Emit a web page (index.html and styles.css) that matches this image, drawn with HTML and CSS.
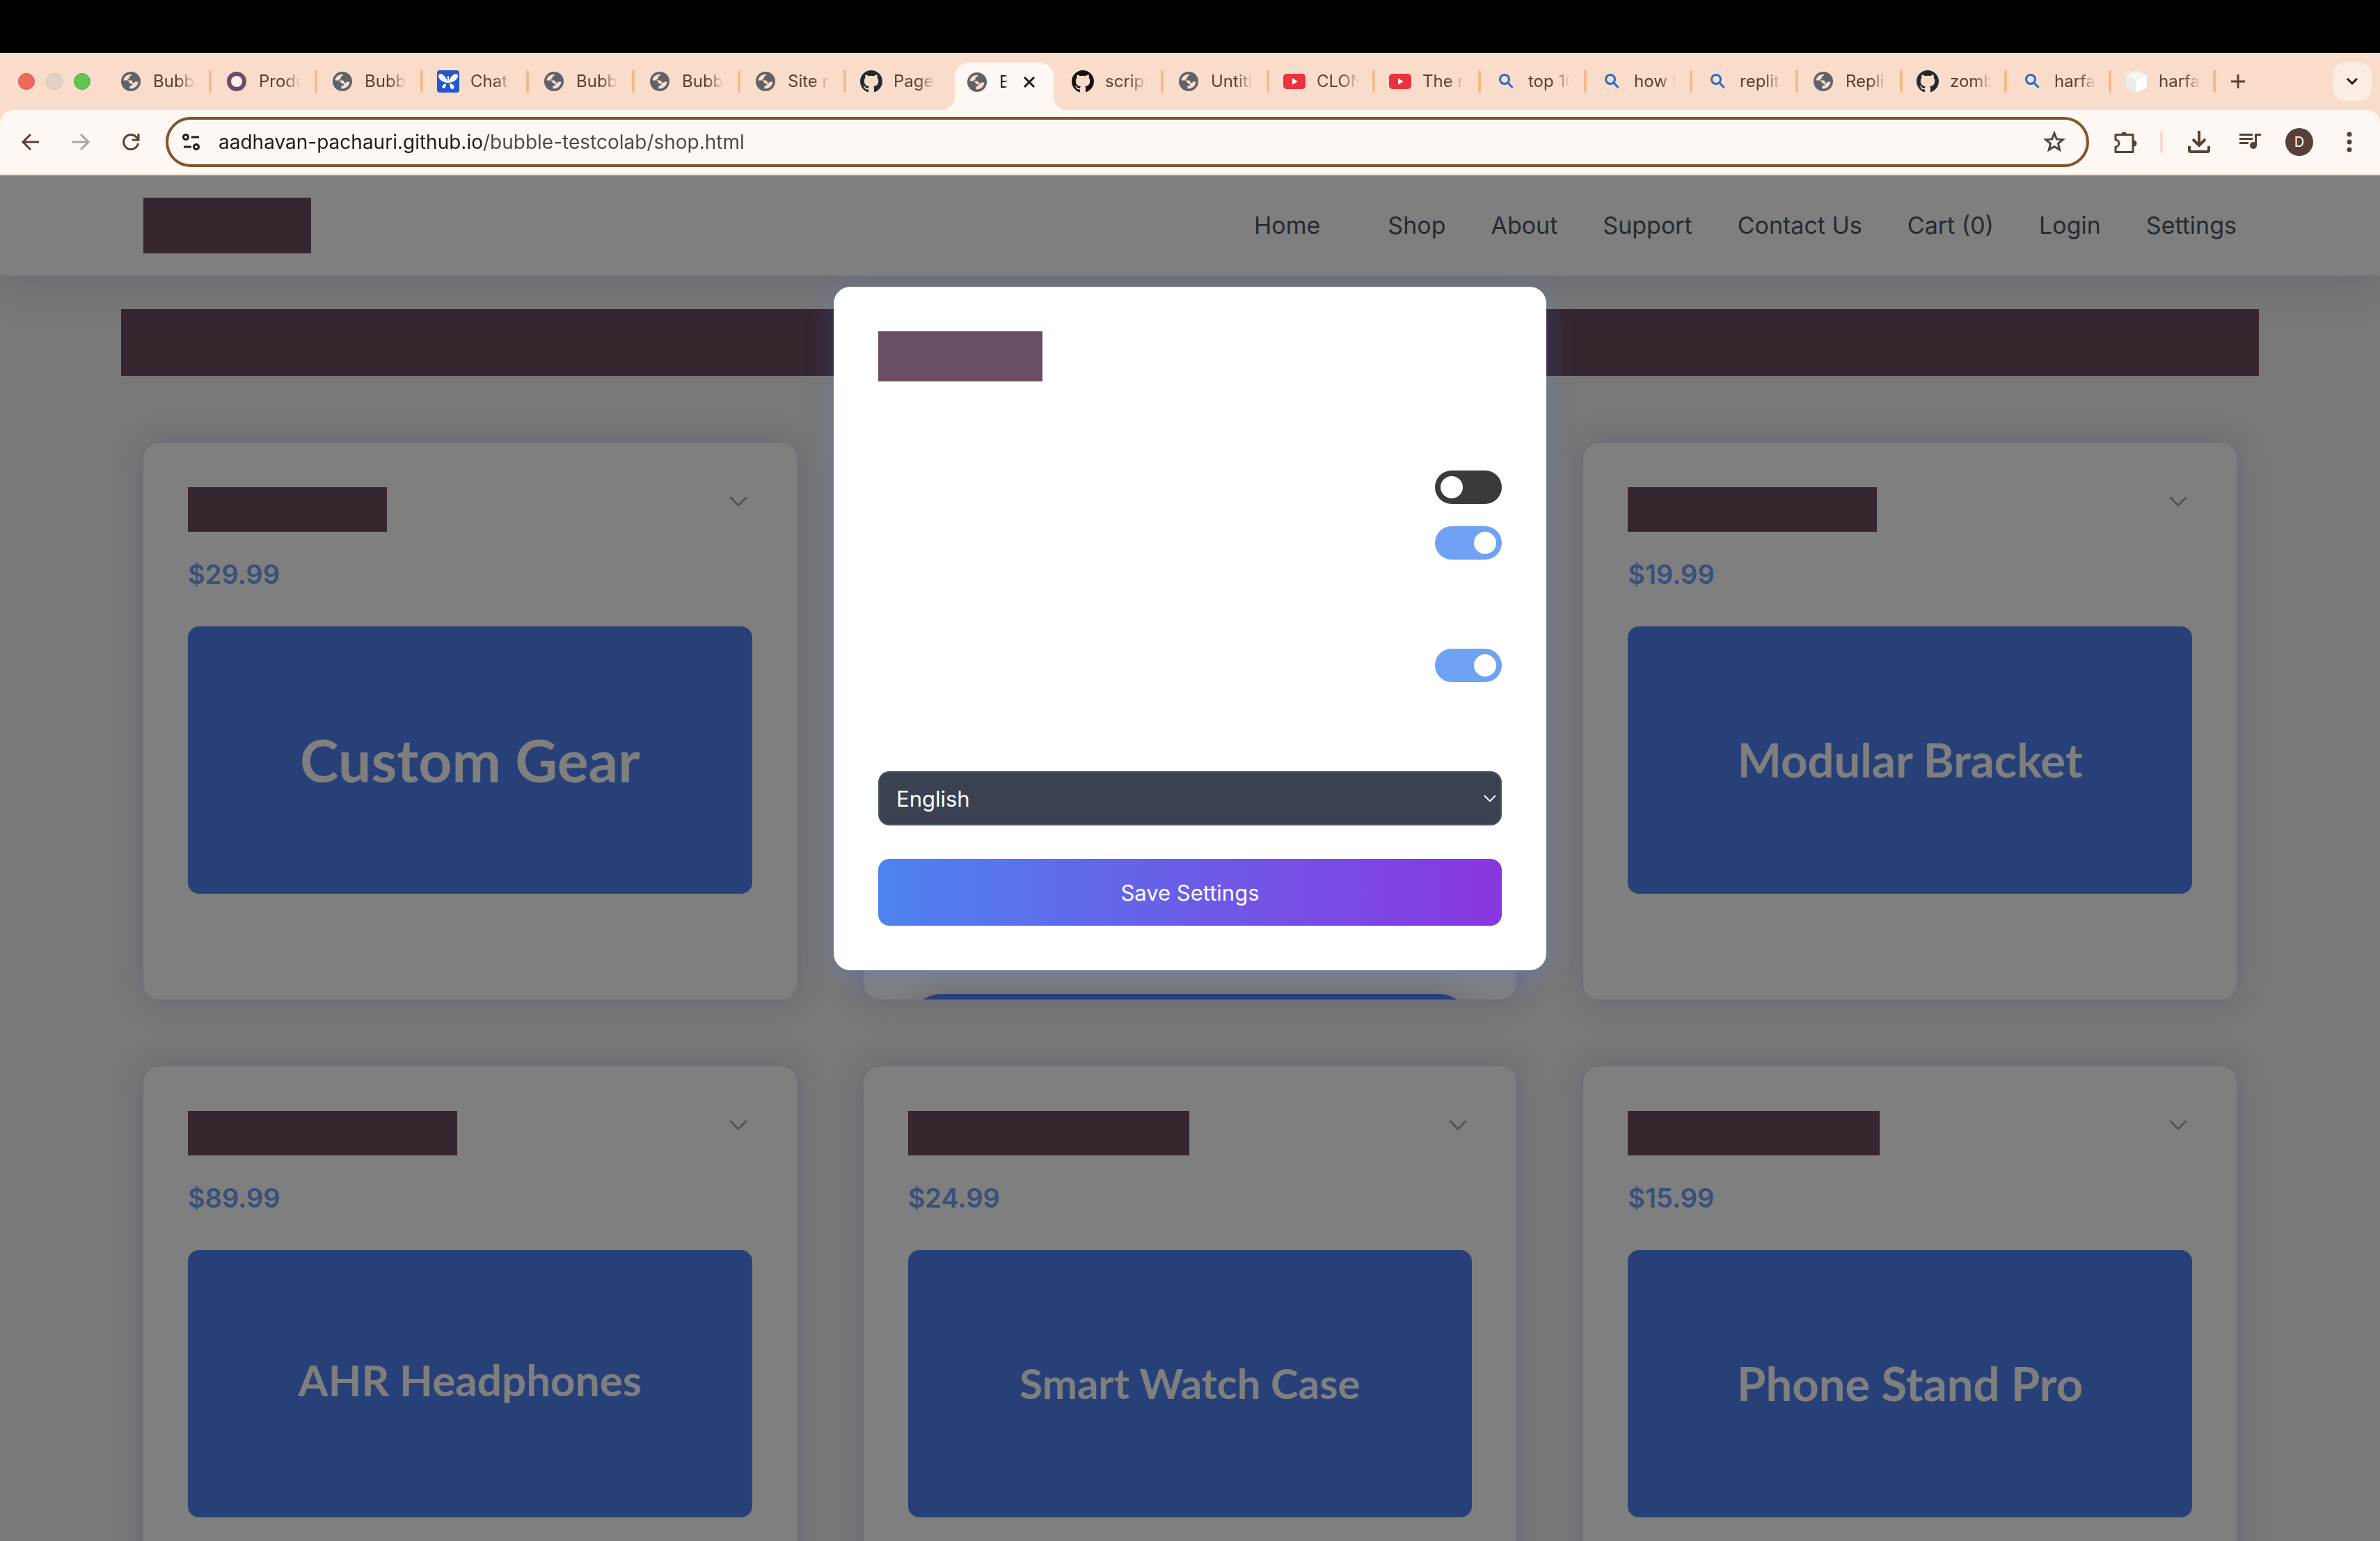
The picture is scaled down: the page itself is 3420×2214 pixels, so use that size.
FILE: index.html
```html
<!DOCTYPE html>
<html lang="en">
<head>
<meta charset="utf-8">
<meta name="viewport" content="width=device-width, initial-scale=1">
<title>Shop</title>
<link rel="stylesheet" href="styles.css">
</head>
<body>
<svg class="sprite" aria-hidden="true">
  <symbol id="globe" viewBox="0 0 28 28"><circle cx="14" cy="14" r="14" fill="#5f6368"/><path fill="#fadccb" d="M3.5 12.500C4 7.500 8.500 3.500 14.500 3.700c.8 1.300.4 2.300-.9 2.600-1.600.3-1.900 1.300-1.700 2.800.1 1.200-1 1.800-2.400 1.800v1.600h4.500c1.800 0 2.400 1 2.500 2.500.2 1 1 1.300 2.200 1.200l1.400-1.700h4.300C24.300 19.700 19.500 24.600 12.500 24.500l-.2-2.800c.2-1.200 1-1.600 2.500-1.600 1.300-.1 1.500-1 1.300-2-.2-.9-1-1.100-2.300-1.200-1.800-.2-2-1.800-3-3.200-.6-.9-1.300-1.200-2.500-1.200z"/></symbol>
  <symbol id="octo" viewBox="0 0 16 16"><path fill="currentColor" d="M8 0C3.580 0 0 3.580 0 8c0 3.540 2.290 6.530 5.470 7.590.4.070.550-.170.550-.380 0-.190-.010-.820-.010-1.490-2.010.370-2.530-.490-2.690-.940-.090-.230-.480-.940-.820-1.130-.280-.150-.680-.520-.010-.530.630-.010 1.080.580 1.230.820.720 1.210 1.870.870 2.330.660.070-.520.280-.870.510-1.070-1.780-.200-3.640-.890-3.640-3.950 0-.870.310-1.590.820-2.150-.080-.200-.360-1.020.080-2.120 0 0 .670-.210 2.200.820.640-.180 1.320-.270 2-.270.680 0 1.360.090 2 .270 1.530-1.040 2.200-.820 2.200-.820.440 1.100.160 1.920.080 2.120.510.560.820 1.270.820 2.150 0 3.070-1.870 3.750-3.650 3.950.290.250.540.730.540 1.480 0 1.070-.010 1.930-.010 2.200 0 .210.150.460.550.380A8.013 8.013 0 0 0 16 8c0-4.420-3.580-8-8-8z"/></symbol>
  <symbol id="tube" viewBox="0 0 32 32"><rect y="5" width="32" height="22" rx="5" fill="#eb323f"/><path d="M13 11.500v9l8-4.500z" fill="#fff"/></symbol>
  <symbol id="lens" viewBox="0 0 32 32" fill="none" stroke="#2b6bc4" stroke-width="3"><circle cx="14" cy="13" r="6.500"/><path d="M18.500 17.500l7 7.500"/></symbol>
  <symbol id="chev" viewBox="0 0 40 40"><path d="M9 15l11 11 11-11" fill="none" stroke="currentColor" stroke-width="3" stroke-linecap="round" stroke-linejoin="round"/></symbol>
</svg>

<div class="notch-bar"></div>
<div class="tab-strip">
  <div class="lights"><span class="light light-red"></span><span class="light light-idle"></span><span class="light light-green"></span></div>
  <nav class="tabs" aria-label="Tabs">
    <a class="tab" href="#"><svg class="fav fav-globe"><use href="#globe"/></svg><span class="tab-title">Bubb</span></a>
    <a class="tab" href="#"><svg class="fav" viewBox="0 0 32 32"><circle cx="16" cy="16" r="11" fill="#fdf3ee" stroke="#6c4c66" stroke-width="6"/></svg><span class="tab-title">Produ</span></a>
    <a class="tab" href="#"><svg class="fav fav-globe"><use href="#globe"/></svg><span class="tab-title">Bubb</span></a>
    <a class="tab" href="#"><svg class="fav" viewBox="0 0 32 32"><rect width="32" height="32" rx="4" fill="#2257ce"/><path fill="#fff" d="M15 18C8 17 2 13 2 8c0-3 4-4 7-1 3 2 5 6 6 9V8h2v8c1-4 3-7 6-9 3-3 7-2 7 1 0 5-6 9-13 10zM8 25c-2-2 1-5 5-6 .5 3-2 9-5 6zM18 19c5 0 8 4 6 7-3 4-6-2-6-7z"/></svg><span class="tab-title">Chat</span></a>
    <a class="tab" href="#"><svg class="fav fav-globe"><use href="#globe"/></svg><span class="tab-title">Bubb</span></a>
    <a class="tab" href="#"><svg class="fav fav-globe"><use href="#globe"/></svg><span class="tab-title">Bubb</span></a>
    <a class="tab" href="#"><svg class="fav fav-globe"><use href="#globe"/></svg><span class="tab-title">Site m</span></a>
    <a class="tab tab-plain" href="#"><svg class="fav fav-dark"><use href="#octo"/></svg><span class="tab-title">Pages</span></a>
    <div class="tab tab-active"><svg class="fav fav-globe"><use href="#globe"/></svg><span class="tab-title">B</span><button class="tab-close" aria-label="Close tab"><svg viewBox="0 0 18 18"><path d="M2 2l14 14M16 2L2 16" stroke="#1f1b17" stroke-width="3"/></svg></button></div>
    <a class="tab" href="#"><svg class="fav fav-black"><use href="#octo"/></svg><span class="tab-title">script</span></a>
    <a class="tab" href="#"><svg class="fav fav-globe"><use href="#globe"/></svg><span class="tab-title">Untitl</span></a>
    <a class="tab" href="#"><svg class="fav"><use href="#tube"/></svg><span class="tab-title">CLON</span></a>
    <a class="tab" href="#"><svg class="fav"><use href="#tube"/></svg><span class="tab-title">The m</span></a>
    <a class="tab" href="#"><svg class="fav"><use href="#lens"/></svg><span class="tab-title">top 10</span></a>
    <a class="tab" href="#"><svg class="fav"><use href="#lens"/></svg><span class="tab-title">how t</span></a>
    <a class="tab" href="#"><svg class="fav"><use href="#lens"/></svg><span class="tab-title">replit</span></a>
    <a class="tab tab-narrow" href="#"><svg class="fav fav-globe"><use href="#globe"/></svg><span class="tab-title">Repli</span></a>
    <a class="tab tab-narrow" href="#"><svg class="fav fav-dark"><use href="#octo"/></svg><span class="tab-title">zomb</span></a>
    <a class="tab tab-narrow" href="#"><svg class="fav"><use href="#lens"/></svg><span class="tab-title">harfa</span></a>
    <a class="tab tab-narrow" href="#"><svg class="fav" viewBox="0 0 32 32"><path fill="#f5f6f2" d="M16 0l15 7-15 7L1 7z"/><path fill="#ecedea" d="M1 7l15 7v18L1 25z"/><path fill="#fff" d="M31 7l-15 7v18l15-7z"/></svg><span class="tab-title">harfa</span></a>
  </nav>
  <button class="new-tab" aria-label="New tab"><svg viewBox="0 0 20 20"><path d="M10 0v20M0 10h20" stroke="#5a4131" stroke-width="3"/></svg></button>
  <button class="tab-search" aria-label="Search tabs"><svg viewBox="0 0 18 12"><path d="M2 2l7 7 7-7" fill="none" stroke="#1f1b17" stroke-width="3"/></svg></button>
</div>

<div class="toolbar">
  <button class="tool" aria-label="Back"><svg viewBox="0 0 32 32"><path d="M28 16H6M16 5L5 16l11 11" fill="none" stroke="#5a4131" stroke-width="3"/></svg></button>
  <button class="tool" aria-label="Forward"><svg viewBox="0 0 32 32"><path d="M4 16h22M16 5l11 11-11 11" fill="none" stroke="#aea59d" stroke-width="3"/></svg></button>
  <button class="tool" aria-label="Reload"><svg viewBox="0 0 32 32"><path d="M26.500 18A10.500 10.500 0 1 1 23.500 8.500l3 3M27 4v9h-9" fill="none" stroke="#5a4131" stroke-width="3"/></svg></button>
  <div class="omnibox">
    <svg class="site-icon" viewBox="0 0 26 26" fill="none" stroke="#1f1b17" stroke-width="3"><circle cx="5" cy="6" r="3.500"/><path d="M13 6h11M2 20h11"/><circle cx="20" cy="20" r="3.500"/></svg>
    <input class="url" type="text" aria-label="Address" value="aadhavan-pachauri.github.io/bubble-testcolab/shop.html">
    <button class="star" aria-label="Bookmark"><svg viewBox="0 0 32 32"><path d="M16 3.500l3.400 8.400 9 .7-6.900 5.800 2.200 8.900L16 22.500l-7.700 4.800 2.200-8.900-6.900-5.800 9-.7z" fill="none" stroke="#4b4542" stroke-width="3"/></svg></button>
  </div>
  <div class="actions">
    <button class="act" aria-label="Extensions"><svg viewBox="0 0 36 36"><path d="M4 7.500h25v25H4v-7.500a5 5 0 0 0 0-10z" fill="none" stroke="#5a4131" stroke-width="3" stroke-linejoin="round"/><path d="M12 6a4.500 4.500 0 0 1 8 0zM30 15.500a4.500 4.500 0 0 1 0 9z" fill="#5a4131"/></svg></button>
    <span class="act-sep"></span>
    <button class="act" aria-label="Downloads"><svg viewBox="0 0 36 36"><path d="M18 2v20M9 14l9 9 9-9M4 24v6q0 2 2 2h24q2 0 2-2v-6" fill="none" stroke="#5a4131" stroke-width="4"/></svg></button>
    <button class="act" aria-label="Media"><svg viewBox="0 0 36 36"><path d="M2 7.500h19M2 13.500h19M2 19.500h13M25.500 24V7.500H33" fill="none" stroke="#5a4131" stroke-width="3"/><circle cx="22" cy="23" r="5" fill="#5a4131"/></svg></button>
    <button class="avatar" aria-label="Profile">D</button>
    <button class="more" aria-label="Menu"><svg viewBox="0 0 8 30" fill="#5a4131"><circle cx="4" cy="4" r="3.500"/><circle cx="4" cy="15" r="3.500"/><circle cx="4" cy="26" r="3.500"/></svg></button>
  </div>
</div>

<div class="page">
  <header class="site-header">
    <div class="site-header-inner">
      <a class="logo" href="#" aria-label="Shop home"></a>
      <nav class="site-nav" aria-label="Main">
        <a class="nav-home" href="#">Home</a><a href="#">Shop</a><a href="#">About</a><a href="#">Support</a><a href="#">Contact Us</a><a href="#">Cart (0)</a><a href="#">Login</a><a href="#">Settings</a>
      </nav>
    </div>
  </header>
  <main class="shop">
    <h1 class="banner" aria-label="Products"></h1>
    <div class="grid">
      <article class="card">
        <div class="card-head"><h2 class="card-title title-gear" aria-label="Custom Gear"></h2><button class="expand" aria-label="Expand"><svg><use href="#chev"/></svg></button></div>
        <p class="price">$29.99</p>
        <div class="thumb thumb-xl">Custom Gear</div>
      </article>
      <article class="card">
        <div class="card-head"><h2 class="card-title title-gear" aria-label="Product"></h2><button class="expand" aria-label="Expand"><svg><use href="#chev"/></svg></button></div>
        <p class="price"></p>
        <div class="thumb"></div>
        <button class="buy" aria-label="Add to cart"></button>
      </article>
      <article class="card">
        <div class="card-head"><h2 class="card-title title-bracket" aria-label="Modular Bracket"></h2><button class="expand" aria-label="Expand"><svg><use href="#chev"/></svg></button></div>
        <p class="price">$19.99</p>
        <div class="thumb thumb-lg">Modular Bracket</div>
      </article>
      <article class="card">
        <div class="card-head"><h2 class="card-title title-phones" aria-label="AHR Headphones"></h2><button class="expand" aria-label="Expand"><svg><use href="#chev"/></svg></button></div>
        <p class="price">$89.99</p>
        <div class="thumb thumb-md">AHR Headphones</div>
      </article>
      <article class="card">
        <div class="card-head"><h2 class="card-title title-watch" aria-label="Smart Watch Case"></h2><button class="expand" aria-label="Expand"><svg><use href="#chev"/></svg></button></div>
        <p class="price">$24.99</p>
        <div class="thumb thumb-sm">Smart Watch Case</div>
      </article>
      <article class="card">
        <div class="card-head"><h2 class="card-title title-stand" aria-label="Phone Stand Pro"></h2><button class="expand" aria-label="Expand"><svg><use href="#chev"/></svg></button></div>
        <p class="price">$15.99</p>
        <div class="thumb thumb-lg">Phone Stand Pro</div>
      </article>
    </div>
  </main>

  <div class="backdrop">
    <form class="modal" role="dialog" aria-label="Settings">
      <h2 class="modal-title" aria-label="Settings"></h2>
      <div class="toggles">
        <input class="toggle" type="checkbox" aria-label="Dark mode">
        <input class="toggle" type="checkbox" aria-label="Animations" checked>
      </div>
      <div class="toggles">
        <input class="toggle" type="checkbox" aria-label="Notifications" checked>
      </div>
      <div class="select-wrap">
        <select class="language" aria-label="Language"><option>English</option></select>
        <svg class="select-arrow" viewBox="0 0 18 12"><path d="M1 2l8 8 8-8" fill="none" stroke="#fff" stroke-width="2"/></svg>
      </div>
      <button class="save" type="button">Save Settings</button>
    </form>
  </div>
</div>
</body>
</html>
```
FILE: styles.css
```css
* { box-sizing: border-box; }
body {
  margin: 0;
  height: 100vh;
  display: flex;
  flex-direction: column;
  overflow: hidden;
  background: #fadccb;
  font-family: Inter, "Liberation Sans", sans-serif;
}
h1, h2, p { margin: 0; }
a { color: inherit; text-decoration: none; }
button { padding: 0; border: 0; background: none; font: inherit; color: inherit; }
svg { display: block; }
.sprite { position: absolute; width: 0; height: 0; }

/* Browser window */
.notch-bar { flex: none; height: 76px; background: #000; }
.tab-strip { flex: none; display: flex; align-items: center; height: 82px; padding: 0 12px 0 26px; }
.lights { flex: none; display: flex; gap: 16px; width: 126px; }
.light { width: 24px; height: 24px; border-radius: 50%; }
.light-red { background: #ec695d; border: 1px solid #d5564b; }
.light-idle { background: #e0d2c8; border: 1px solid #cbbdb4; }
.light-green { background: #61c554; border: 1px solid #4fa83f; }
.tabs { display: flex; align-self: stretch; align-items: center; color: #5a4131; font-size: 24px; }
.tab { position: relative; display: flex; align-items: center; gap: 16px; width: 152px; height: 32px; padding-left: 20px; border-right: 4px solid #f8b88a; }
.tab-narrow { width: 150px; }
.tab-plain { border-color: transparent; }
.fav { flex: none; width: 32px; height: 32px; }
.fav-globe { padding: 2px; }
.fav-dark { color: #24292f; }
.fav-black { color: #15120f; }
.tab-title {
  width: 60px;
  overflow: hidden;
  white-space: nowrap;
  line-height: 34px;
  -webkit-mask-image: linear-gradient(to right, #000 60%, transparent 100%);
  mask-image: linear-gradient(to right, #000 60%, transparent 100%);
}
.tab-active {
  align-self: flex-end;
  width: 142px;
  height: 68px;
  margin: 0 6px 0 4px;
  padding: 0 0 12px 16px;
  border: 0;
  border-radius: 20px 20px 0 0;
  background: #fdf8f4;
  color: #1f1b17;
}
.tab-active::before, .tab-active::after { content: ""; position: absolute; bottom: 0; width: 20px; height: 20px; }
.tab-active::before { left: -20px; background: radial-gradient(circle at 0 0, transparent 20px, #fdf8f4 20px); }
.tab-active::after { right: -20px; background: radial-gradient(circle at 100% 0, transparent 20px, #fdf8f4 20px); }
.tab-active .tab-title { width: 12px; }
.tab-close { width: 18px; height: 18px; margin-left: 6px; }
.new-tab { width: 20px; height: 20px; margin-left: 22px; }
.tab-search { display: grid; place-items: center; width: 56px; height: 56px; margin-left: auto; border-radius: 20px; background: #fcede4; }
.tab-search svg { width: 18px; height: 12px; }

.toolbar {
  flex: none;
  display: flex;
  align-items: center;
  height: 94px;
  padding: 0 40px 0 28px;
  border-bottom: 2px solid #f0dfd5;
  border-radius: 20px 20px 0 0;
  background: #fdf8f4;
}
.tool { width: 32px; height: 32px; margin-right: 40px; }
.omnibox { flex: 1; display: flex; align-items: center; height: 72px; margin-left: -6px; padding: 0 30px 0 20px; border: 4px solid #855327; border-radius: 36px; }
.site-icon { flex: none; width: 26px; height: 26px; margin-right: 26px; }
.url {
  flex: 1;
  min-width: 0;
  height: 48px;
  padding: 0;
  border: 0;
  outline: 0;
  background: linear-gradient(to right, #1f1b17 379px, #4b4845 379px);
  -webkit-background-clip: text;
  background-clip: text;
  color: transparent;
  font-family: inherit;
  font-size: 28px;
}
.star { width: 32px; height: 32px; }
.star svg, .act svg { width: 100%; height: 100%; }
.actions { display: flex; align-items: center; margin-left: 34px; }
.act { width: 36px; height: 36px; margin-right: 38px; }
.act-sep { width: 4px; height: 32px; margin: 0 34px 0 -6px; border-radius: 2px; background: #fadccb; }
.avatar { width: 40px; height: 40px; margin: 0 48px 0 -6px; border-radius: 50%; background: #593f39; color: #fff; font-size: 20px; }
.more { width: 8px; height: 30px; }

/* Shop page */
.page { position: relative; flex: 1; min-height: 0; overflow: hidden; background: #f0f0f0; }
.site-header { position: relative; background: #fff; box-shadow: 0 8px 60px rgba(99, 115, 241, 0.22); }
.site-header-inner { display: flex; align-items: center; justify-content: space-between; max-width: 3072px; margin: 0 auto; padding: 32px; }
.logo { width: 241px; height: 80px; background: #6c4c60; }
.site-nav { display: flex; gap: 65px; color: #4b5563; font-size: 34px; line-height: 50px; }
.nav-home { margin-right: 32px; }
.shop { max-width: 3072px; margin: 48px auto 0; }
.banner { height: 96px; background: #6c4c60; }
.grid { display: grid; grid-template-columns: repeat(3, 1fr); gap: 96px; padding: 96px 32px; }
.card { height: 800px; padding: 64px; overflow: hidden; border-radius: 24px; background: #fff; box-shadow: 0 0 40px rgba(99, 115, 241, 0.26); }
.card-head { display: flex; justify-content: space-between; }
.card-title { height: 64px; background: #6c4c60; }
.title-gear { width: 286px; }
.title-bracket { width: 358px; }
.title-phones { width: 387px; }
.title-watch { width: 404px; }
.title-stand { width: 362px; }
.expand { width: 40px; height: 40px; color: #a6a4b4; }
.expand svg { width: 40px; height: 40px; }
.price { height: 56px; margin: 32px 0 48px; color: #70a2f4; font-size: 38px; font-weight: 600; line-height: 58px; }
.thumb { display: flex; align-items: center; justify-content: center; height: 384px; padding-bottom: 2px; border-radius: 16px; background: #4e80f0; color: #fff; font-family: Lato, sans-serif; font-weight: 700; }
.thumb-xl { font-size: 84px; }
.thumb-lg { font-size: 67px; }
.thumb-md { padding-bottom: 12px; font-size: 62px; }
.thumb-sm { font-size: 60px; }
.buy { display: block; width: 100%; height: 96px; margin-top: 144px; border-radius: 48px; background: #4e80f0; box-shadow: 0 8px 40px rgba(60, 70, 90, 0.35); }

/* Settings dialog */
.backdrop { position: absolute; inset: 0; padding: 160px 32px; background: rgba(0, 0, 0, 0.5); }
.modal { max-width: 1024px; margin: 0 auto; padding: 64px; border-radius: 24px; background: #fff; box-shadow: 0 8px 40px rgba(80, 130, 246, 0.28); }
.modal-title { width: 236px; height: 72px; margin-bottom: 128px; background: #6c4e64; }
.toggles { display: flex; flex-direction: column; align-items: flex-end; gap: 32px; margin-bottom: 128px; }
.toggle { appearance: none; width: 96px; height: 48px; margin: 0; padding: 8px; border-radius: 24px; background: #3a3a3a; }
.toggle::before { content: ""; display: block; width: 32px; height: 32px; border-radius: 50%; background: #fff; }
.toggle:checked { background: #70a2f4; }
.toggle:checked::before { margin-left: auto; }
.select-wrap { position: relative; margin-bottom: 48px; }
.language { appearance: none; display: block; width: 100%; height: 78px; padding: 0 24px; border: 2px solid #4b5563; border-radius: 16px; background: #3a4150; color: #fff; font-family: inherit; font-size: 31px; }
.select-arrow { position: absolute; top: 33px; right: 8px; width: 18px; height: 12px; }
.save { display: block; width: 100%; height: 96px; border-radius: 16px; background: linear-gradient(to right, #4c83ef, #8a36e0); color: #fff; font-size: 31px; }
```
